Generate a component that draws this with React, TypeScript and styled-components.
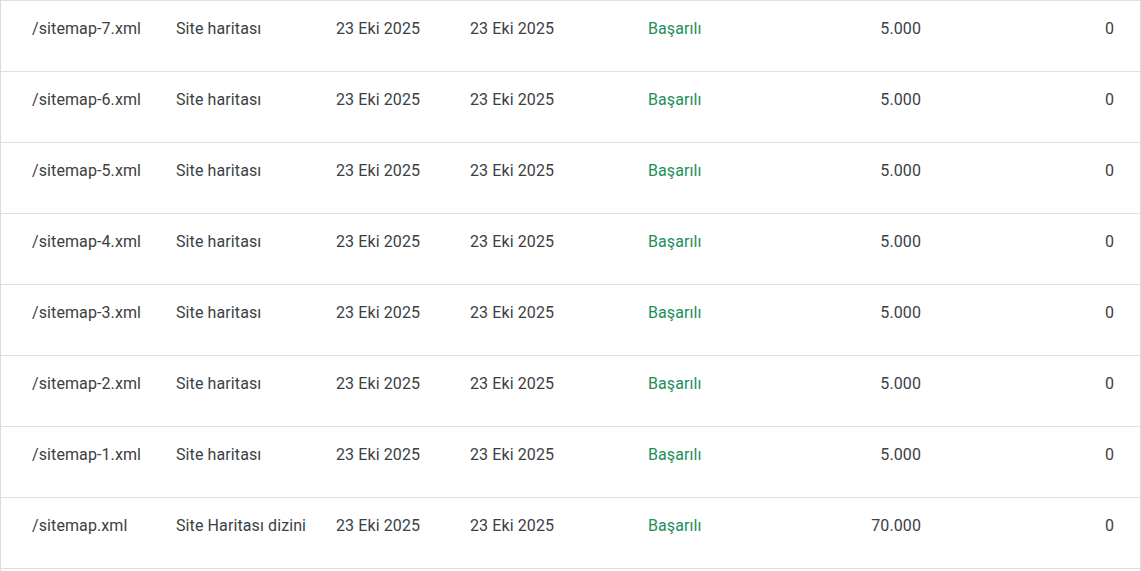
import styled, { createGlobalStyle } from 'styled-components';

const GlobalStyle = createGlobalStyle`
  html, body {
    margin: 0;
    padding: 0;
    background: #fff;
  }
  body {
    font-family: Roboto, 'Liberation Sans', sans-serif;
    -webkit-font-smoothing: antialiased;
  }
`;

type Sitemap = {
  path: string;
  type: string;
  submitted: string;
  lastRead: string;
  status: string;
  discovered: string;
  videos: string;
};

const rows: Sitemap[] = [
  ...[7, 6, 5, 4, 3, 2, 1].map((n) => ({
    path: `/sitemap-${n}.xml`,
    type: 'Site haritası',
    submitted: '23 Eki 2025',
    lastRead: '23 Eki 2025',
    status: 'Başarılı',
    discovered: '5.000',
    videos: '0',
  })),
  {
    path: '/sitemap.xml',
    type: 'Site Haritası dizini',
    submitted: '23 Eki 2025',
    lastRead: '23 Eki 2025',
    status: 'Başarılı',
    discovered: '70.000',
    videos: '0',
  },
];

function App() {
  return (
    <>
      <GlobalStyle />
      <Panel>
        <Table>
          {rows.map((r) => (
            <Row key={r.path}>
              <Cell $first>{r.path}</Cell>
              <Cell>{r.type}</Cell>
              <Cell>{r.submitted}</Cell>
              <Cell>{r.lastRead}</Cell>
              <Cell $status>{r.status}</Cell>
              <Cell $right>{r.discovered}</Cell>
              <Cell $right $last>
                {r.videos}
              </Cell>
            </Row>
          ))}
        </Table>
      </Panel>
    </>
  );
}

export default App;

const Panel = styled.div`
  box-sizing: border-box;
  width: 1141px;
  min-height: 100vh;
  border-left: 1px solid #dadce0;
  border-right: 1px solid #dadce0;
`;

const Table = styled.div`
  border-top: 1px solid #e0e0e0;
`;

const Row = styled.div`
  display: grid;
  grid-template-columns: 159px 160px 134px 178px 168px 137px 1fr;
  height: 71px;
  box-sizing: border-box;
  border-bottom: 1px solid #e0e0e0;
`;

const Cell = styled.div<{
  $first?: boolean;
  $last?: boolean;
  $right?: boolean;
  $status?: boolean;
}>`
  box-sizing: border-box;
  padding: 18px 16px 0 16px;
  padding-left: ${(p) => (p.$first ? '31px' : '16px')};
  padding-right: ${(p) => (p.$last ? '26px' : '16px')};
  font-size: 16px;
  line-height: 20px;
  letter-spacing: 0.1px;
  white-space: nowrap;
  text-align: ${(p) => (p.$right ? 'right' : 'left')};
  color: ${(p) => (p.$status ? '#1e8e5a' : '#3c4043')};
`;
